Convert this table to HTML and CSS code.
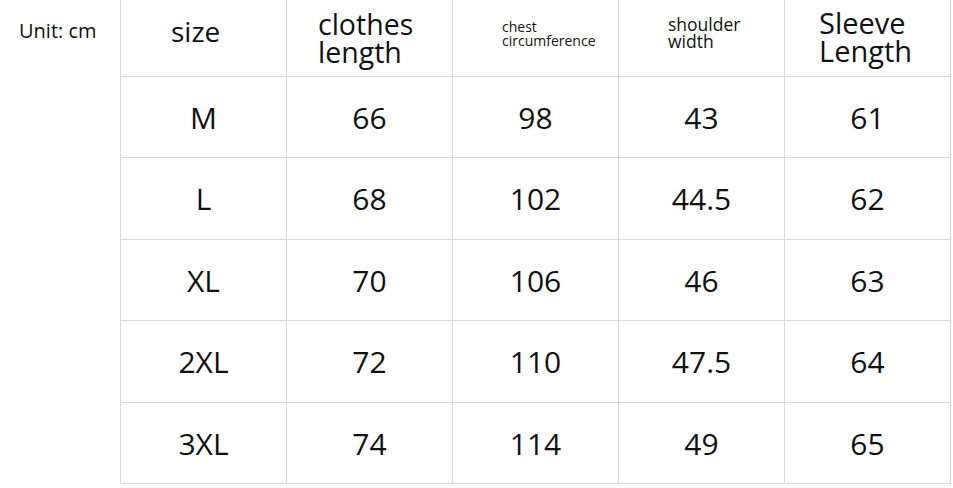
FILE: index.html
```html
<!DOCTYPE html>
<html lang="en">
<head>
<meta charset="utf-8">
<title>Size chart</title>
<link rel="stylesheet" href="styles.css">
</head>
<body>
<div class="page">
  <div class="unit">Unit: cm</div>
  <div class="chart">
    <div class="cell head h-size">size</div>
    <div class="cell head h-length">clothes<br>length</div>
    <div class="cell head h-chest">chest<br>circumference</div>
    <div class="cell head h-shoulder">shoulder<br>width</div>
    <div class="cell head h-sleeve last">Sleeve<br>Length</div>

    <div class="cell">M</div><div class="cell">66</div><div class="cell">98</div><div class="cell">43</div><div class="cell last">61</div>
    <div class="cell">L</div><div class="cell">68</div><div class="cell">102</div><div class="cell">44.5</div><div class="cell last">62</div>
    <div class="cell">XL</div><div class="cell">70</div><div class="cell">106</div><div class="cell">46</div><div class="cell last">63</div>
    <div class="cell">2XL</div><div class="cell">72</div><div class="cell">110</div><div class="cell">47.5</div><div class="cell last">64</div>
    <div class="cell">3XL</div><div class="cell">74</div><div class="cell">114</div><div class="cell">49</div><div class="cell last">65</div>
  </div>
</div>
</body>
</html>
```

FILE: styles.css
```css
html, body {
  margin: 0;
  padding: 0;
  background: #ffffff;
}

body {
  font-family: "Open Sans", "Noto Sans", "Liberation Sans", sans-serif;
  color: #111111;
}

.page {
  display: flex;
  align-items: flex-start;
}

.unit {
  width: 120px;
  box-sizing: border-box;
  padding: 21px 0 0 19px;
  font-size: 20px;
  line-height: 20px;
}

.chart {
  display: grid;
  grid-template-columns: 166px 166px 166px 166px 167px;
  grid-template-rows: 77px 81px 82px 81px 82px 81px;
}

.cell {
  box-sizing: border-box;
  border-left: 1px solid #d4d7e2;
  border-bottom: 1px solid #d4d7e2;
  display: flex;
  align-items: center;
  justify-content: center;
  font-size: 30px;
}

.cell.last {
  border-right: 1px solid #d4d7e2;
}

.head {
  display: block;
  text-align: left;
  font-size: 28px;
  line-height: 28px;
}

.h-size {
  padding: 17px 0 0 50px;
}

.h-length {
  padding: 10px 0 0 31px;
  font-size: 28.5px;
}

.h-chest {
  padding: 20px 0 0 49px;
  font-size: 14px;
  line-height: 14px;
}

.h-shoulder {
  padding: 16px 0 0 49px;
  font-size: 17.5px;
  line-height: 17px;
}

.h-sleeve {
  padding: 9px 0 0 34px;
  font-size: 29px;
}
```
